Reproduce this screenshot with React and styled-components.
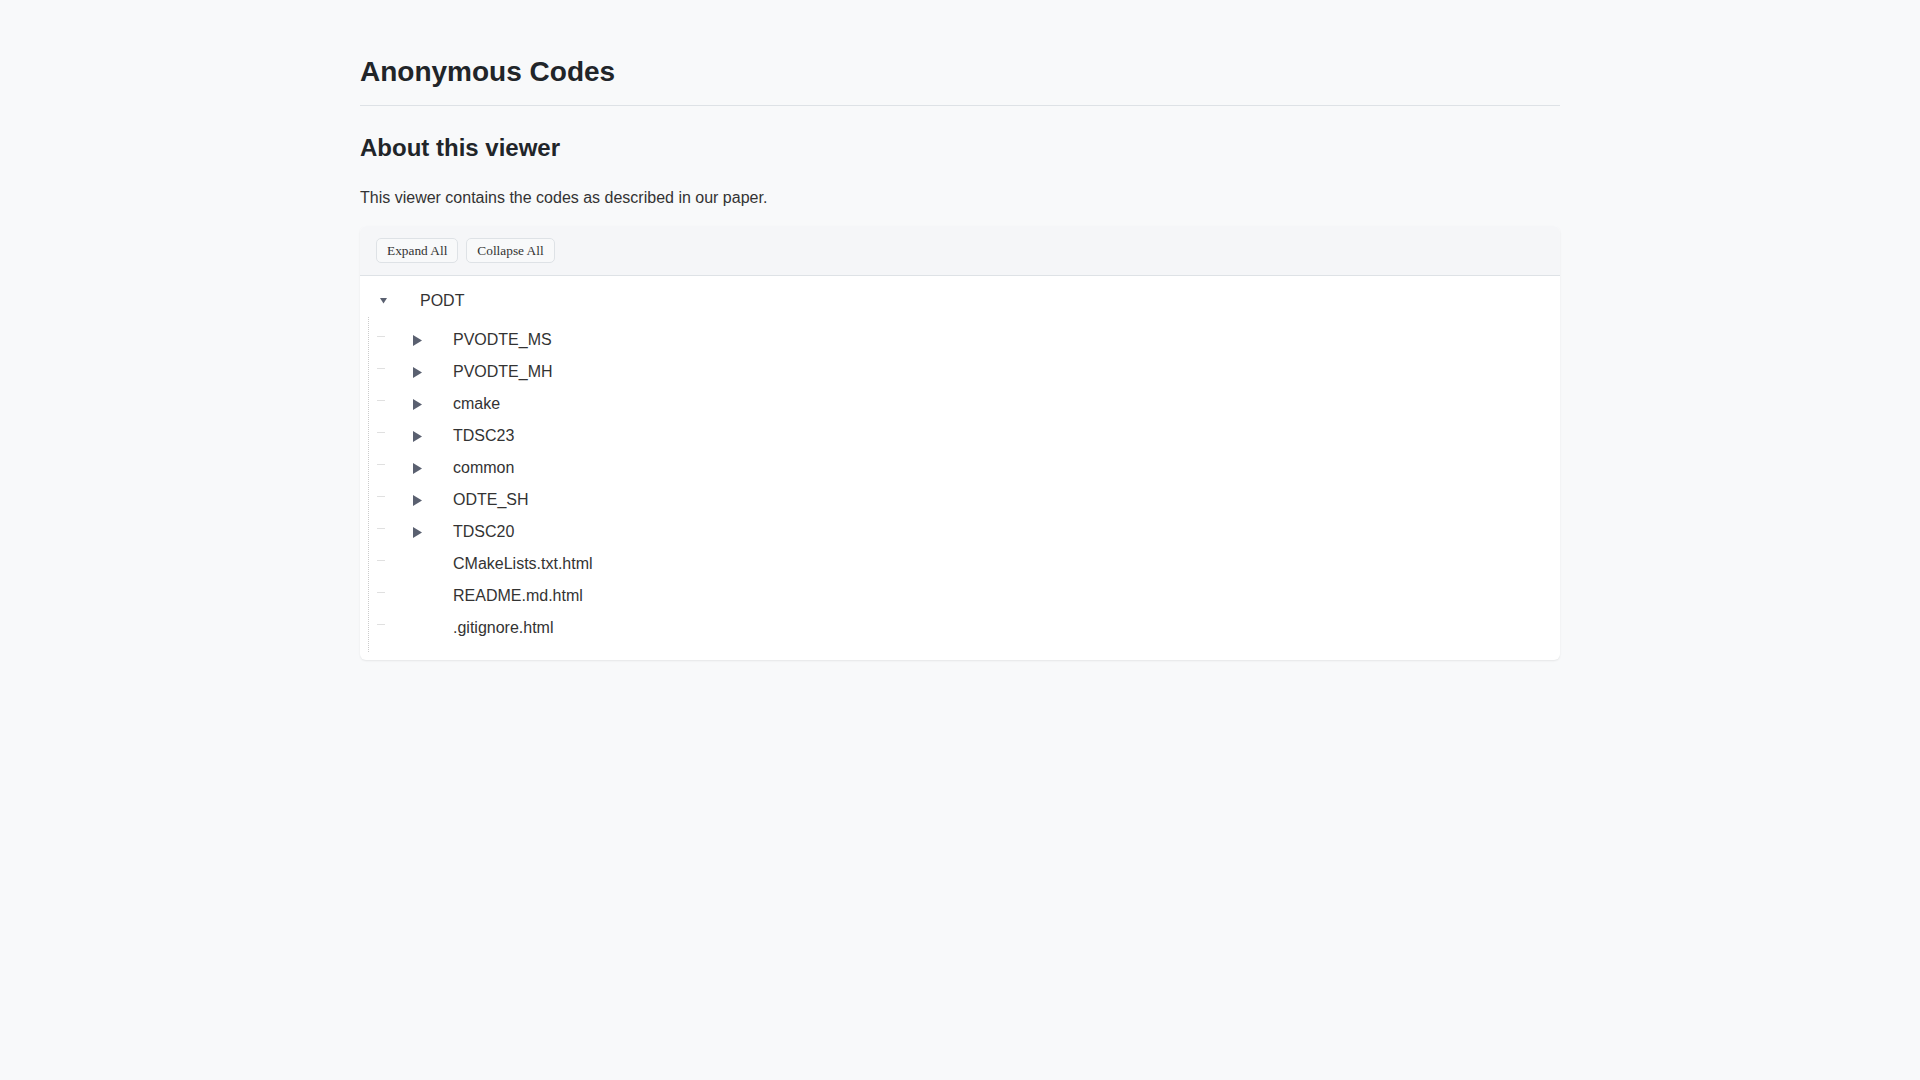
import React, { useState } from 'react';
import styled, { createGlobalStyle } from 'styled-components';

const GlobalStyle = createGlobalStyle`
  html, body {
    margin: 0;
    padding: 0;
    background: #f8f9fa;
  }
  body {
    font-family: "Liberation Sans", Arial, Helvetica, sans-serif;
    color: #212529;
    min-height: 1080px;
  }
`;

const Page = styled.div`
  max-width: 1200px;
  margin: 0 auto;
  padding-top: 55px;
`;

const Title = styled.h1`
  margin: 0;
  font-size: 28px;
  line-height: 1.2;
  font-weight: 700;
  padding-bottom: 16px;
  border-bottom: 1px solid #dee2e6;
`;

const SectionTitle = styled.h2`
  margin: 28px 0 0;
  font-size: 24px;
  line-height: 1.2;
  font-weight: 700;
`;

const Intro = styled.p`
  margin: 24px 0 16px;
  font-size: 16px;
  line-height: 24px;
  color: #333;
`;

const Card = styled.div`
  background: #fff;
  border-radius: 6px;
  box-shadow: 0 1px 2px rgba(0, 0, 0, 0.08);
  overflow: hidden;
`;

const Toolbar = styled.div`
  display: flex;
  gap: 8px;
  padding: 12px 16px;
  background: #f5f6f8;
  border-bottom: 1px solid #dee2e6;
`;

const ToolButton = styled.button`
  font-family: "Liberation Serif", "Times New Roman", serif;
  font-size: 13.33px;
  line-height: 15px;
  color: #333;
  padding: 4px 10px;
  background: #f8f9fa;
  border: 1px solid #dee2e6;
  border-radius: 5px;
  cursor: pointer;
`;

const Tree = styled.div`
  padding: 9px 0 8px 8px;
`;

const RootRow = styled.div`
  display: flex;
  align-items: center;
  height: 32px;
  padding-left: 12px;
  font-size: 16px;
  color: #333;
  cursor: pointer;
`;

const CaretBox = styled.span`
  display: inline-flex;
  align-items: center;
  width: 40px;
  flex: none;
  color: #5a6070;
`;

const Children = styled.ul`
  list-style: none;
  margin: 0;
  padding: 7px 0 8px;
  border-left: 1px dotted #ccc;
`;

const ChildRow = styled.li`
  position: relative;
  display: flex;
  align-items: center;
  height: 32px;
  padding-left: 44px;
  font-size: 16px;
  color: #333;
  cursor: ${(p) => (p.$folder ? 'pointer' : 'default')};

  &::before {
    content: '';
    position: absolute;
    left: 8px;
    top: 12px;
    width: 8px;
    border-top: 1px solid #e0e0e0;
  }
`;

const Caret = ({ open }) =>
  open ? (
    <svg width="7" height="6" viewBox="0 0 7 6">
      <polygon points="0,0 7,0 3.5,5.5" fill="currentColor" />
    </svg>
  ) : (
    <svg width="9" height="11" viewBox="0 0 9 11">
      <polygon points="0,0 9,5.5 0,11" fill="currentColor" />
    </svg>
  );

const entries = [
  { name: 'PVODTE_MS', folder: true },
  { name: 'PVODTE_MH', folder: true },
  { name: 'cmake', folder: true },
  { name: 'TDSC23', folder: true },
  { name: 'common', folder: true },
  { name: 'ODTE_SH', folder: true },
  { name: 'TDSC20', folder: true },
  { name: 'CMakeLists.txt.html' },
  { name: 'README.md.html' },
  { name: '.gitignore.html' },
];

export default function App() {
  const [open, setOpen] = useState(true);

  return (
    <>
      <GlobalStyle />
      <Page>
        <Title>Anonymous Codes</Title>
        <SectionTitle>About this viewer</SectionTitle>
        <Intro>This viewer contains the codes as described in our paper.</Intro>
        <Card>
          <Toolbar>
            <ToolButton onClick={() => setOpen(true)}>Expand All</ToolButton>
            <ToolButton onClick={() => setOpen(false)}>Collapse All</ToolButton>
          </Toolbar>
          <Tree>
            <RootRow onClick={() => setOpen(!open)}>
              <CaretBox>
                <Caret open={open} />
              </CaretBox>
              PODT
            </RootRow>
            {open && (
              <Children>
                {entries.map((e) => (
                  <ChildRow key={e.name} $folder={e.folder}>
                    <CaretBox>{e.folder && <Caret />}</CaretBox>
                    {e.name}
                  </ChildRow>
                ))}
              </Children>
            )}
          </Tree>
        </Card>
      </Page>
    </>
  );
}
